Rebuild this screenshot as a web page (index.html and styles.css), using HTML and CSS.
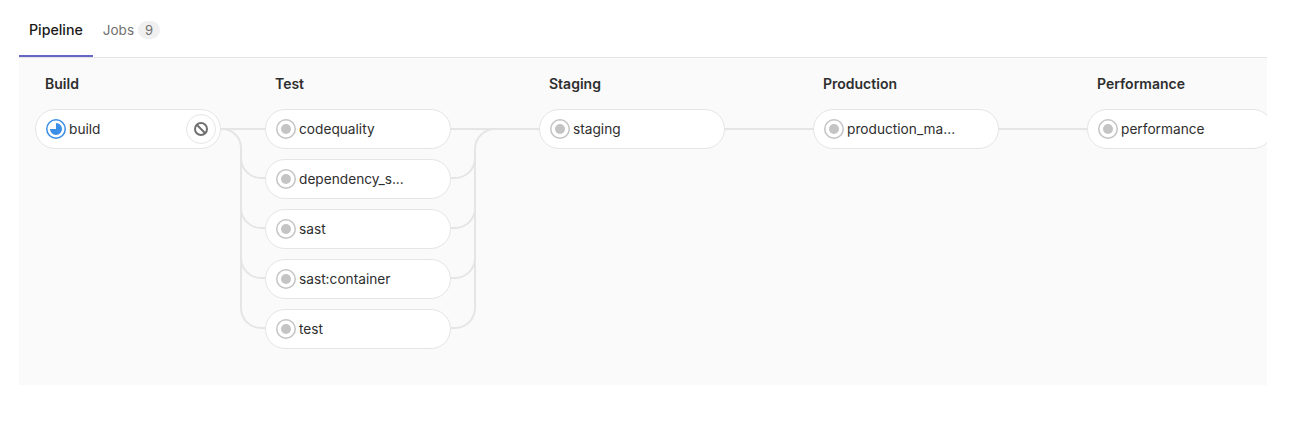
FILE: index.html
```html
<!DOCTYPE html>
<html lang="en">
<head>
<meta charset="utf-8">
<title>Pipeline</title>
<link rel="stylesheet" href="styles.css">
</head>
<body>
<svg width="0" height="0" class="defs" aria-hidden="true">
  <symbol id="st-created" viewBox="0 0 20 20">
    <circle cx="10" cy="10" r="9.25" fill="#fff" stroke="#c4c4c4" stroke-width="1.5"/>
    <circle cx="10" cy="10" r="5" fill="#c4c4c4"/>
  </symbol>
  <symbol id="st-running" viewBox="0 0 20 20">
    <circle cx="10" cy="10" r="9.25" fill="#fff" stroke="#3a8ee6" stroke-width="1.5"/>
    <path d="M10 4a6 6 0 1 1-6 6h6z" fill="#3a8ee6"/>
  </symbol>
</svg>
<main class="page">
  <nav class="tabs">
    <a class="tab tab-active">Pipeline</a>
    <a class="tab">Jobs<span class="badge">9</span></a>
  </nav>
  <section class="panel">
    <svg class="links" width="1248" height="327" viewBox="19 58 1248 327" fill="none" stroke="#e5e5e5" stroke-width="2" aria-hidden="true">
      <path d="M220 129H266"/>
      <path d="M222 129a19 19 0 0 1 19 19V308a20 20 0 0 0 20 20h5"/>
      <path d="M241 158a20 20 0 0 0 20 20h5"/>
      <path d="M241 208a20 20 0 0 0 20 20h5"/>
      <path d="M241 258a20 20 0 0 0 20 20h5"/>
      <path d="M451 129H540"/>
      <path d="M495 129a20 20 0 0 0-20 20V308a20 20 0 0 1-20 20h-4"/>
      <path d="M451 178h4a20 20 0 0 0 20-20"/>
      <path d="M451 228h4a20 20 0 0 0 20-20"/>
      <path d="M451 278h4a20 20 0 0 0 20-20"/>
      <path d="M725 129H814"/>
      <path d="M999 129H1088"/>
    </svg>
    <div class="graph">
      <div class="stage stage-first">
        <h3 class="stage-title">Build</h3>
        <div class="job">
          <svg class="status" width="20" height="20"><use href="#st-running"/></svg>
          <span class="job-name">build</span>
          <button class="action" type="button" aria-label="Cancel">
            <svg width="14" height="14" viewBox="0 0 14 14" fill="none" stroke="#707070" stroke-width="2"><circle cx="7" cy="7" r="6"/><path d="M2.8 2.8l8.4 8.4"/></svg>
          </button>
        </div>
      </div>
      <div class="stage">
        <h3 class="stage-title">Test</h3>
        <div class="job"><svg class="status" width="20" height="20"><use href="#st-created"/></svg><span class="job-name">codequality</span></div>
        <div class="job"><svg class="status" width="20" height="20"><use href="#st-created"/></svg><span class="job-name">dependency_s...</span></div>
        <div class="job"><svg class="status" width="20" height="20"><use href="#st-created"/></svg><span class="job-name">sast</span></div>
        <div class="job"><svg class="status" width="20" height="20"><use href="#st-created"/></svg><span class="job-name">sast:container</span></div>
        <div class="job"><svg class="status" width="20" height="20"><use href="#st-created"/></svg><span class="job-name">test</span></div>
      </div>
      <div class="stage">
        <h3 class="stage-title">Staging</h3>
        <div class="job"><svg class="status" width="20" height="20"><use href="#st-created"/></svg><span class="job-name">staging</span></div>
      </div>
      <div class="stage">
        <h3 class="stage-title">Production</h3>
        <div class="job"><svg class="status" width="20" height="20"><use href="#st-created"/></svg><span class="job-name">production_ma...</span></div>
      </div>
      <div class="stage">
        <h3 class="stage-title">Performance</h3>
        <div class="job"><svg class="status" width="20" height="20"><use href="#st-created"/></svg><span class="job-name">performance</span></div>
      </div>
    </div>
  </section>
</main>
</body>
</html>
```
FILE: styles.css
```css
* { box-sizing: border-box; }
html, body { margin: 0; padding: 0; background: #fff; }
body {
  font-family: "Inter", "Liberation Sans", sans-serif;
  font-size: 14px;
  color: #2e2e2e;
  height: 431px;
  overflow: hidden;
}
.defs { position: absolute; }
.page { margin: 0 39px 0 19px; }
.tabs {
  display: flex;
  height: 58px;
  border-bottom: 1px solid #e5e5e5;
}
.tab {
  display: flex;
  align-items: center;
  height: 57px;
  padding: 4px 10px 0;
  border-bottom: 2px solid transparent;
  color: #707070;
  font-size: 13.5px;
}
.tab-active {
  border-bottom-color: #6666c4;
  color: #1a1a1a;
  font-size: 14.2px;
  font-weight: 500;
}
.badge {
  display: inline-flex;
  align-items: center;
  justify-content: center;
  width: 22px;
  height: 18px;
  margin-left: 4px;
  border-radius: 9px;
  background: #f0f0f0;
  font-size: 13px;
}
.panel {
  position: relative;
  height: 327px;
  background: #fafafa;
  overflow: hidden;
}
.links { position: absolute; left: 0; top: 0; }
.graph {
  position: relative;
  display: flex;
  gap: 88px;
  padding: 17px 0 0 16px;
}
.stage {
  flex: 0 0 186px;
  display: flex;
  flex-direction: column;
  gap: 10px;
}
.stage-first { margin-right: -44px; }
.stage-title {
  height: 24px;
  margin: 0;
  padding-left: 10px;
  color: #2e2e2e;
  font-size: 14px;
  font-weight: 600;
  line-height: 18px;
}
.job {
  display: flex;
  align-items: center;
  gap: 3px;
  height: 40px;
  padding: 0 4px 0 10px;
  background: #fff;
  border: 1px solid #e5e5e5;
  border-radius: 20px;
}
.status { flex: none; }
.job-name {
  white-space: nowrap;
  color: #2e2e2e;
  font-size: 13.7px;
}
.action {
  display: flex;
  align-items: center;
  justify-content: center;
  width: 30px;
  height: 30px;
  margin-left: auto;
  padding: 0;
  background: #fff;
  border: 1px solid #e5e5e5;
  border-radius: 50%;
}
```
